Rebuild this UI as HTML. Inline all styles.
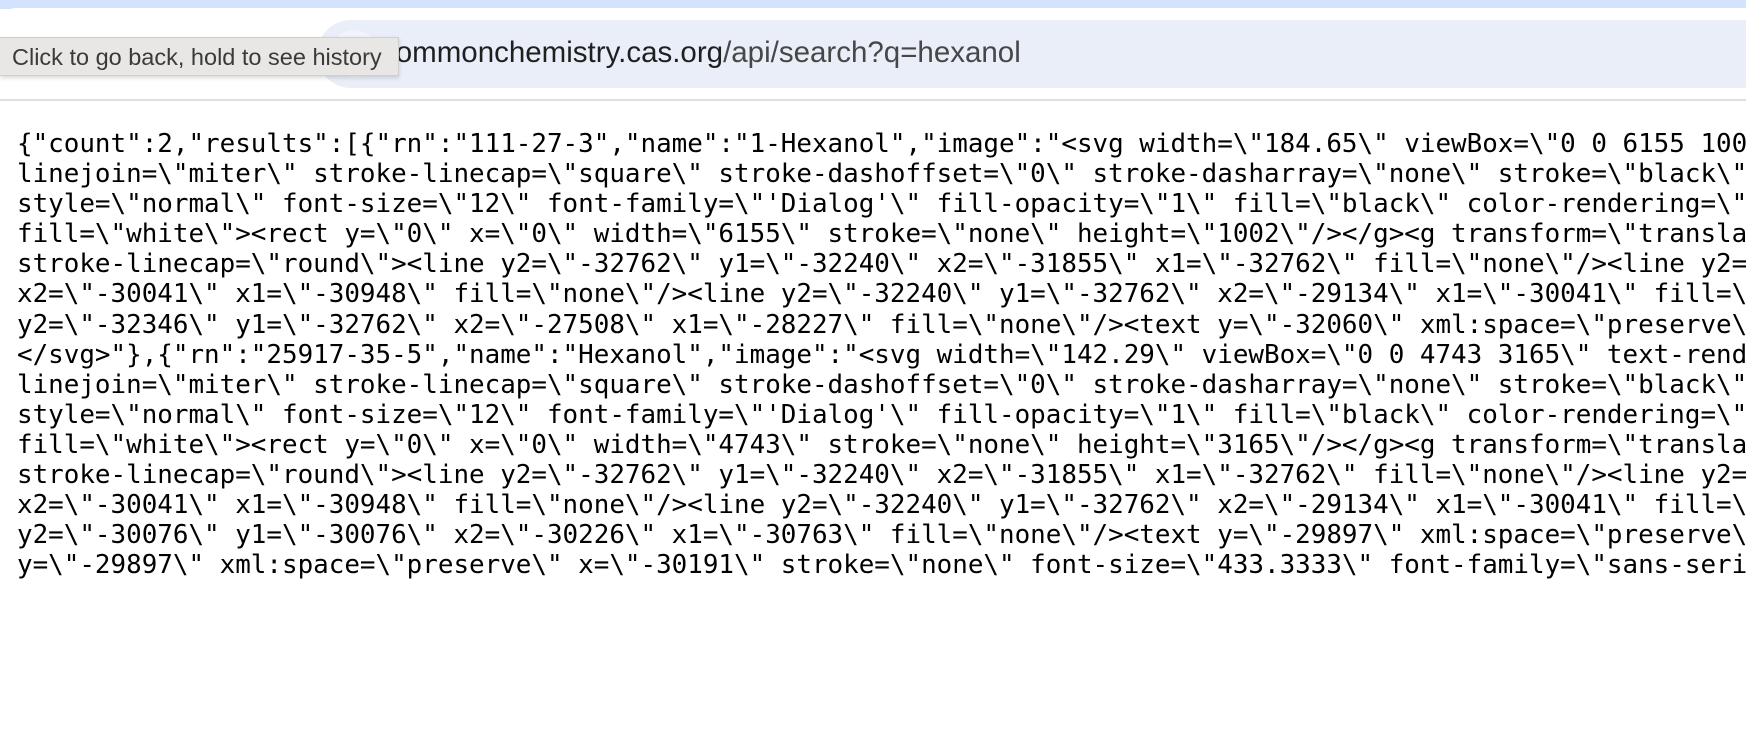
<!DOCTYPE html>
<html><head><meta charset="utf-8"><style>
body{margin:0;width:1746px;height:730px;overflow:hidden;background:#fff;position:relative;font-family:"Liberation Sans",sans-serif}
.strip{position:absolute;left:0;top:0;width:1746px;height:9px;background:#d3e3fd}
.tb{position:absolute;left:0;top:8px;width:1746px;height:92px;background:#fff;border-top-left-radius:16px}
.pill{position:absolute;left:317px;top:20px;width:1460px;height:68px;background:#e9eef8;border-radius:34px}
.circ{position:absolute;left:330px;top:30px;width:48px;height:48px;border-radius:50%;background:#f2f4fa}
.url{position:absolute;left:381px;top:36px;font-size:29.5px;color:#1f1f1f;white-space:nowrap}
.url span{color:#474747}
.sep{position:absolute;left:0;top:99px;width:1746px;height:2px;background:#dedede}
.tip{position:absolute;left:0;top:37px;width:399px;height:39px;background:#e8e7e6;border:1px solid #cfcfcf;border-left:none;box-shadow:0 2px 4px rgba(0,0,0,.15);font-size:23.5px;color:#3a3a3a;line-height:38px;padding-left:12px;box-sizing:border-box;white-space:nowrap;overflow:hidden}
pre{position:absolute;left:17px;top:129px;width:1729px;overflow:hidden;margin:0;font-family:"DejaVu Sans Mono","Liberation Mono",monospace;font-size:25.9px;line-height:30.1px;color:#000;white-space:pre}
</style></head><body>
<div class="strip"></div><div class="tb"></div>
<div class="pill"></div><div class="circ"></div>
<div class="url">commonchemistry.cas.org<span>/api/search?q=hexanol</span></div>
<div class="sep"></div>
<div class="tip">Click to go back, hold to see history</div>
<pre>{"count":2,"results":[{"rn":"111-27-3","name":"1-Hexanol","image":"&lt;svg width=\"184.65\" viewBox=\"0 0 6155 1002\"
linejoin=\"miter\" stroke-linecap=\"square\" stroke-dashoffset=\"0\" stroke-dasharray=\"none\" stroke=\"black\" 
style=\"normal\" font-size=\"12\" font-family=\"'Dialog'\" fill-opacity=\"1\" fill=\"black\" color-rendering=\"auto\"
fill=\"white\"&gt;&lt;rect y=\"0\" x=\"0\" width=\"6155\" stroke=\"none\" height=\"1002\"/&gt;&lt;/g&gt;&lt;g transform=\"translate
stroke-linecap=\"round\"&gt;&lt;line y2=\"-32762\" y1=\"-32240\" x2=\"-31855\" x1=\"-32762\" fill=\"none\"/&gt;&lt;line y2=
x2=\"-30041\" x1=\"-30948\" fill=\"none\"/&gt;&lt;line y2=\"-32240\" y1=\"-32762\" x2=\"-29134\" x1=\"-30041\" fill=\"none
y2=\"-32346\" y1=\"-32762\" x2=\"-27508\" x1=\"-28227\" fill=\"none\"/&gt;&lt;text y=\"-32060\" xml:space=\"preserve\"
&lt;/svg&gt;"},{"rn":"25917-35-5","name":"Hexanol","image":"&lt;svg width=\"142.29\" viewBox=\"0 0 4743 3165\" text-rendering
linejoin=\"miter\" stroke-linecap=\"square\" stroke-dashoffset=\"0\" stroke-dasharray=\"none\" stroke=\"black\" 
style=\"normal\" font-size=\"12\" font-family=\"'Dialog'\" fill-opacity=\"1\" fill=\"black\" color-rendering=\"auto\"
fill=\"white\"&gt;&lt;rect y=\"0\" x=\"0\" width=\"4743\" stroke=\"none\" height=\"3165\"/&gt;&lt;/g&gt;&lt;g transform=\"translate
stroke-linecap=\"round\"&gt;&lt;line y2=\"-32762\" y1=\"-32240\" x2=\"-31855\" x1=\"-32762\" fill=\"none\"/&gt;&lt;line y2=
x2=\"-30041\" x1=\"-30948\" fill=\"none\"/&gt;&lt;line y2=\"-32240\" y1=\"-32762\" x2=\"-29134\" x1=\"-30041\" fill=\"none
y2=\"-30076\" y1=\"-30076\" x2=\"-30226\" x1=\"-30763\" fill=\"none\"/&gt;&lt;text y=\"-29897\" xml:space=\"preserve\"
y=\"-29897\" xml:space=\"preserve\" x=\"-30191\" stroke=\"none\" font-size=\"433.3333\" font-family=\"sans-serif\"</pre>
</body></html>
